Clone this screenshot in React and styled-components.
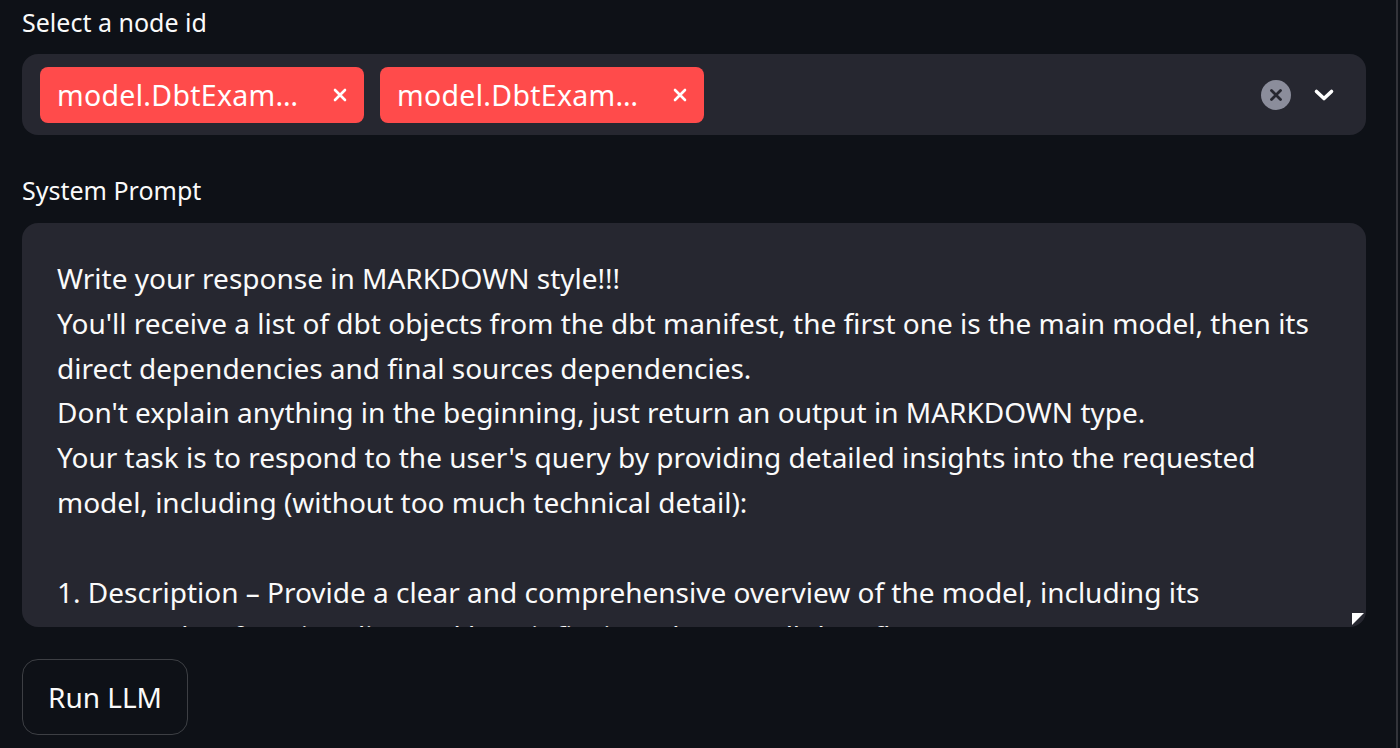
import React from 'react'
import styled, { createGlobalStyle } from 'styled-components'

const Global = createGlobalStyle`
  body {
    margin: 0;
    background: #0e1117;
    color: #fafafa;
    font-family: "Noto Sans", "Open Sans", sans-serif;
  }
`

const Page = styled.div`
  display: flex;
  height: 748px;
  overflow: hidden;
`

const Main = styled.main`
  width: 1344px;
  padding-left: 22px;
  display: flex;
  flex-direction: column;
`

const ScrollTrack = styled.div`
  width: 2px;
  margin-left: auto;
  margin-right: 2px;
  background: #33343a;
`

const Label = styled.label`
  display: block;
  font-size: 25px;
  line-height: 39px;
  padding-top: ${p => p.top || 0}px;
  margin-bottom: ${p => p.gap || 12}px;
`

const SelectBox = styled.div`
  display: flex;
  align-items: center;
  height: 81px;
  box-sizing: border-box;
  padding: 12px 0 12px 18px;
  background: #262730;
  border-radius: 16px;
`

const Tags = styled.div`
  display: flex;
  gap: 16px;
  flex: 1;
`

const Tag = styled.span`
  display: flex;
  align-items: center;
  justify-content: space-between;
  width: 324px;
  height: 56px;
  box-sizing: border-box;
  padding: 0 17px;
  background: #ff4b4b;
  border-radius: 8px;
  font-size: 28.5px;
  letter-spacing: 0.3px;
  color: #fff;
  white-space: nowrap;
`

const IconSlot = styled.span`
  display: flex;
  align-items: center;
  justify-content: center;
`

const Controls = styled.div`
  display: flex;
  align-items: center;
  gap: 21px;
  margin-right: 30px;
`

const FieldWrap = styled.div`
  position: relative;
  height: 404px;
  border-radius: 16px;
  overflow: hidden;
  background: #262730;
`

const TextArea = styled.textarea`
  display: block;
  width: 100%;
  height: 100%;
  box-sizing: border-box;
  margin: 0;
  padding: 33px 35px 0;
  border: none;
  outline: none;
  resize: none;
  overflow: hidden;
  white-space: pre;
  background: transparent;
  color: #fafafa;
  font-family: "Noto Sans", "Open Sans", sans-serif;
  font-size: 28px;
  line-height: 44.8px;
`

const Grip = styled.span`
  position: absolute;
  right: 2px;
  bottom: 2px;
  width: 12px;
  height: 12px;
  background: #fff;
  clip-path: polygon(0 0, 100% 0, 0 100%);
`

const Button = styled.button`
  align-self: flex-start;
  margin-top: 32px;
  width: 166px;
  height: 76px;
  box-sizing: border-box;
  padding: 0;
  background: transparent;
  border: 1.5px solid rgba(250, 250, 250, 0.2);
  border-radius: 16px;
  color: #fafafa;
  font-family: "Noto Sans", "Open Sans", sans-serif;
  font-size: 28px;
  white-space: nowrap;
  text-align: center;
`

const Close = ({ size = 14, color = '#fff', width = 2.6 }) =>
  <svg width={size} height={size} viewBox="0 0 14 14">
    <path d="M2 2 L12 12 M12 2 L2 12" stroke={color} strokeWidth={width} strokeLinecap="round" />
  </svg>

const ClearIcon = () =>
  <svg width="30" height="30" viewBox="0 0 30 30">
    <circle cx="15" cy="15" r="15" fill="#8b8d9b" />
    <path d="M10.5 10.5 L19.5 19.5 M19.5 10.5 L10.5 19.5" stroke="#262730" strokeWidth="2.8" strokeLinecap="round" />
  </svg>

const Chevron = () =>
  <svg width="24" height="24" viewBox="0 0 24 24">
    <path d="M4.5 8.5 L12 15.5 L19.5 8.5" fill="none" stroke="#fff" strokeWidth="3.6" strokeLinecap="round" strokeLinejoin="round" />
  </svg>

const prompt = [
  'Write your response in MARKDOWN style!!!',
  "You'll receive a list of dbt objects from the dbt manifest, the first one is the main model, then its",
  'direct dependencies and final sources dependencies.',
  "Don't explain anything in the beginning, just return an output in MARKDOWN type.",
  "Your task is to respond to the user's query by providing detailed insights into the requested",
  'model, including (without too much technical detail):',
  '',
  '1. Description \u2013 Provide a clear and comprehensive overview of the model, including its',
  'purpose, key functionality, and how it fits into the overall data flow.',
].join('\n')

const selected = ['model.DbtExam\u2026', 'model.DbtExam\u2026']

export default function App() {
  return (
    <Page>
      <Global />
      <Main>
        <Label top={3}>Select a node id</Label>
        <SelectBox>
          <Tags>
            {selected.map((t, i) => (
              <Tag key={i}>
                {t}
                <IconSlot><Close /></IconSlot>
              </Tag>
            ))}
          </Tags>
          <Controls>
            <IconSlot><ClearIcon /></IconSlot>
            <IconSlot><Chevron /></IconSlot>
          </Controls>
        </SelectBox>
        <Label top={36} gap={13}>System Prompt</Label>
        <FieldWrap>
          <TextArea defaultValue={prompt} spellCheck={false} />
          <Grip />
        </FieldWrap>
        <Button>Run LLM</Button>
      </Main>
      <ScrollTrack />
    </Page>
  )
}
